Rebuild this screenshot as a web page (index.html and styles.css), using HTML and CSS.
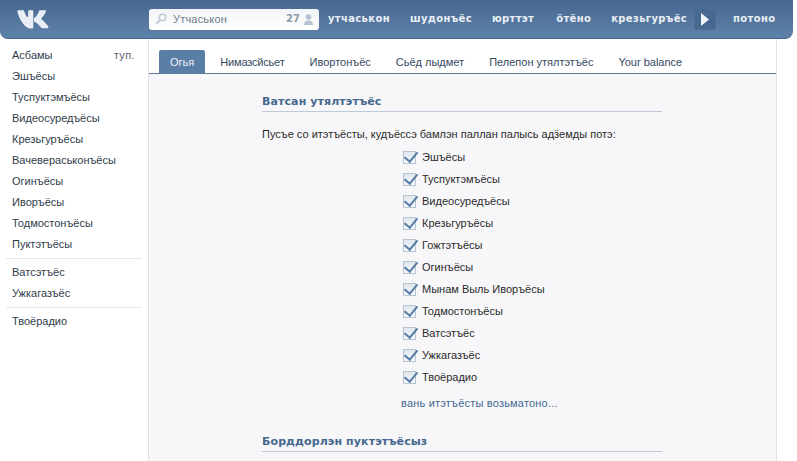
FILE: index.html
```html
<!DOCTYPE html>
<html lang="udm">
<head>
<meta charset="utf-8">
<title>Огья</title>
<link rel="stylesheet" href="styles.css">
</head>
<body>
<header class="top">
  <a class="logo" href="#" aria-label="VK">
    <svg width="33" height="19" viewBox="0 0 34 20"><path fill="#e9eef4" d="M0 1.2C0 .6.4.2 1 .2h5.200c.5 0 .8.3 1 .8 1 3.200 2.700 6.400 3.700 6.400.4 0 .5-.3.5-1V1.200c0-.6.4-1 1-1h3.400c.7 0 1 .4 1 1v17.200c0 .6-.4 1-1 1h-1.800C9 19.400 2.300 11.500 0 1.200Z"/><path fill="#e9eef4" d="M17.500 8.600c1.700-.3 4.200-4.200 5.300-7.500.2-.6.500-.9 1.100-.9h5.200c.9 0 1.200.5 1 1.200-.7 2.700-3.400 6.200-5.200 8 2.500 1.900 6 5.300 7.500 7.500.6.900.2 2.400-1 2.400h-5c-.7 0-1-.2-1.500-.8-2-2.500-4.600-5.400-7.400-6.300Z"/></svg>
  </a>
  <label class="search">
    <svg class="search-icon" width="12" height="12" viewBox="0 0 12 12"><circle cx="7.500" cy="4.500" r="3.200" fill="none" stroke="#c3ccd6" stroke-width="1.600"/><path d="M5 7 1.500 10.500" stroke="#c3ccd6" stroke-width="2"/></svg>
    <span class="search-text">Утчаськон</span>
    <b class="count">27</b>
    <svg class="person" width="9" height="11" viewBox="0 0 9 11"><circle cx="4.500" cy="3" r="2.800" fill="#b4c1cf"/><path fill="#b4c1cf" d="M0 11c0-3 1.500-4.500 4.500-4.500S9 8 9 11Z"/></svg>
  </label>
  <nav class="top-nav">
    <a href="#">утчаськон</a>
    <a href="#">шудонъёс</a>
    <a href="#">юрттэт</a>
    <a href="#">ӧтёно</a>
    <a href="#">крезьгуръёс</a>
    <button class="play" type="button" aria-label="play"><svg width="8" height="13" viewBox="0 0 8 13"><path fill="#f3f6f9" d="M0 0 8 6.500 0 13Z"/></svg></button>
    <a class="last" href="#">потоно</a>
  </nav>
</header>
<div class="page">
  <aside class="side">
    <a class="side-item" href="#"><span>Асбамы</span><span class="muted">туп.</span></a>
    <a class="side-item" href="#">Эшъёсы</a>
    <a class="side-item" href="#">Туспуктэмъёсы</a>
    <a class="side-item" href="#">Видеосуредъёсы</a>
    <a class="side-item" href="#">Крезьгуръёсы</a>
    <a class="side-item" href="#">Вачевераськонъёсы</a>
    <a class="side-item" href="#">Огинъёсы</a>
    <a class="side-item" href="#">Иворъёсы</a>
    <a class="side-item" href="#">Тодмостонъёсы</a>
    <a class="side-item" href="#">Пуктэтъёсы</a>
    <hr class="side-sep">
    <a class="side-item" href="#">Ватсэтъёс</a>
    <a class="side-item" href="#">Ужкагазъёс</a>
    <hr class="side-sep">
    <a class="side-item" href="#">Твоёрадио</a>
  </aside>
  <main class="main">
    <div class="tabs">
      <a class="tab active" href="#">Огья</a>
      <a class="tab" href="#">Нимазсйсьет</a>
      <a class="tab" href="#">Ивортонъёс</a>
      <a class="tab" href="#">Сьёд лыдмет</a>
      <a class="tab" href="#">Пелепон утялтэтъёс</a>
      <a class="tab" href="#">Your balance</a>
    </div>
    <section class="panel">
      <h2 class="title">Ватсан утялтэтъёс</h2>
      <p class="lead">Пусъе со итэтъёсты, кудъёссэ бамлэн паллан палысь адӟемды потэ:</p>
      <ul class="checks">
        <li><span class="box"></span>Эшъёсы</li>
        <li><span class="box"></span>Туспуктэмъёсы</li>
        <li><span class="box"></span>Видеосуредъёсы</li>
        <li><span class="box"></span>Крезьгуръёсы</li>
        <li><span class="box"></span>Гожтэтъёсы</li>
        <li><span class="box"></span>Огинъёсы</li>
        <li><span class="box"></span>Мынам Выль Иворъёсы</li>
        <li><span class="box"></span>Тодмостонъёсы</li>
        <li><span class="box"></span>Ватсэтъёс</li>
        <li><span class="box"></span>Ужкагазъёс</li>
        <li><span class="box"></span>Твоёрадио</li>
      </ul>
      <a class="more" href="#">вань итэтъёсты возьматоно...</a>
      <h2 class="title second">Борддорлэн пуктэтъёсыз</h2>
    </section>
  </main>
</div>
</body>
</html>
```
FILE: styles.css
```css
* { box-sizing: border-box; }
html, body { margin: 0; height: 100%; overflow: hidden; }
body { background: #fff; font: 11px/14px "Liberation Sans", "DejaVu Sans", sans-serif; color: #2b2b2b; }
a { text-decoration: none; color: inherit; }

.top {
  height: 39px; width: 793px;
  display: flex; align-items: center;
  background: linear-gradient(#47678f, #5f82ab);
  border-bottom: 1px solid #46658b;
  border-radius: 0 0 8px 8px;
}
.logo { display: flex; margin-left: 17px; width: 132px; }
.search {
  width: 170px; height: 21px; background: linear-gradient(#f2f4f7, #fff);
  border-radius: 3px; display: flex; align-items: center; padding: 0 6px 0 6px; color: #6f7c88;
}
.search-icon { margin-right: 6px; }
.search-text { flex: 1; letter-spacing: .2px; }
.count { color: #8c9baa; margin-right: 4px; font-family: "DejaVu Sans", sans-serif; font-size: 10px; }
.top-nav { display: flex; align-items: center; margin-left: 9px; color: #e8eef5; font: bold 10px/14px "DejaVu Sans", sans-serif; letter-spacing: .35px; }
.top-nav a { margin-right: 20px; }
.top-nav a:nth-child(3) { margin-right: 22px; }
.top-nav a:nth-child(5) { margin-right: 7px; }
.top-nav .last { margin: 0 0 0 17px; }
.play {
  width: 22px; height: 22px; padding: 0; display: flex; align-items: center; justify-content: center;
  background: #47688f; border: 1px solid #4c6d94; border-radius: 2px;
}

.page { display: flex; height: 422px; }
.side { width: 148px; padding: 6px 0 0 6px; color: #2f3c4a; }
.side-item { display: flex; justify-content: space-between; height: 21px; line-height: 21px; padding: 0 13px 0 6px; }
.muted { color: #5d6770; letter-spacing: .4px; }
.side-sep { border: 0; border-top: 1px solid #e5e7ea; margin: 3px 6px 3px 0; height: 0; }

.main { width: 629px; background: #f7f7f9; border-left: 1px solid #dfe2e6; border-right: 1px solid #dfe2e6; }
.tabs { height: 35px; padding: 11px 0 0 10px; background: #fff; border-bottom: 1px solid #5c7a9c; display: flex; gap: 5px; color: #34495f; }
.tab { height: 23px; padding: 1px 10px 0; line-height: 23px; border-radius: 2px 2px 0 0; }
.tab.active { background: #5b7ea7; color: #eef2f6; padding: 1px 11px 0; }
.tab:nth-child(2) { letter-spacing: -.18px; }

.panel { padding: 20px 0 0 113px; width: 513px; }
.title { margin: 0; height: 18px; font: bold 11px/16px "DejaVu Sans", sans-serif; letter-spacing: .1px; color: #45688e; border-bottom: 1px solid #bfcbd9; }
.lead { margin: 15px 0 5px; height: 14px; }
.checks { list-style: none; margin: 0 0 0 141px; padding: 0; }
.checks li { display: flex; align-items: center; height: 22px; }
.box { position: relative; width: 13px; height: 13px; margin-right: 6px; background: linear-gradient(#dfe6ee, #f7f9fb); border: 1px solid #b7c3cf; }
.box::after {
  content: ""; position: absolute; left: 3px; top: -3px; width: 6px; height: 11px;
  border: solid #547ca6; border-width: 0 2px 2px 0; transform: rotate(40deg);
}
.more { display: block; margin: 8px 0 0 139px; height: 14px; color: #45688e; letter-spacing: .2px; }
.second { margin-top: 24px; }
```
